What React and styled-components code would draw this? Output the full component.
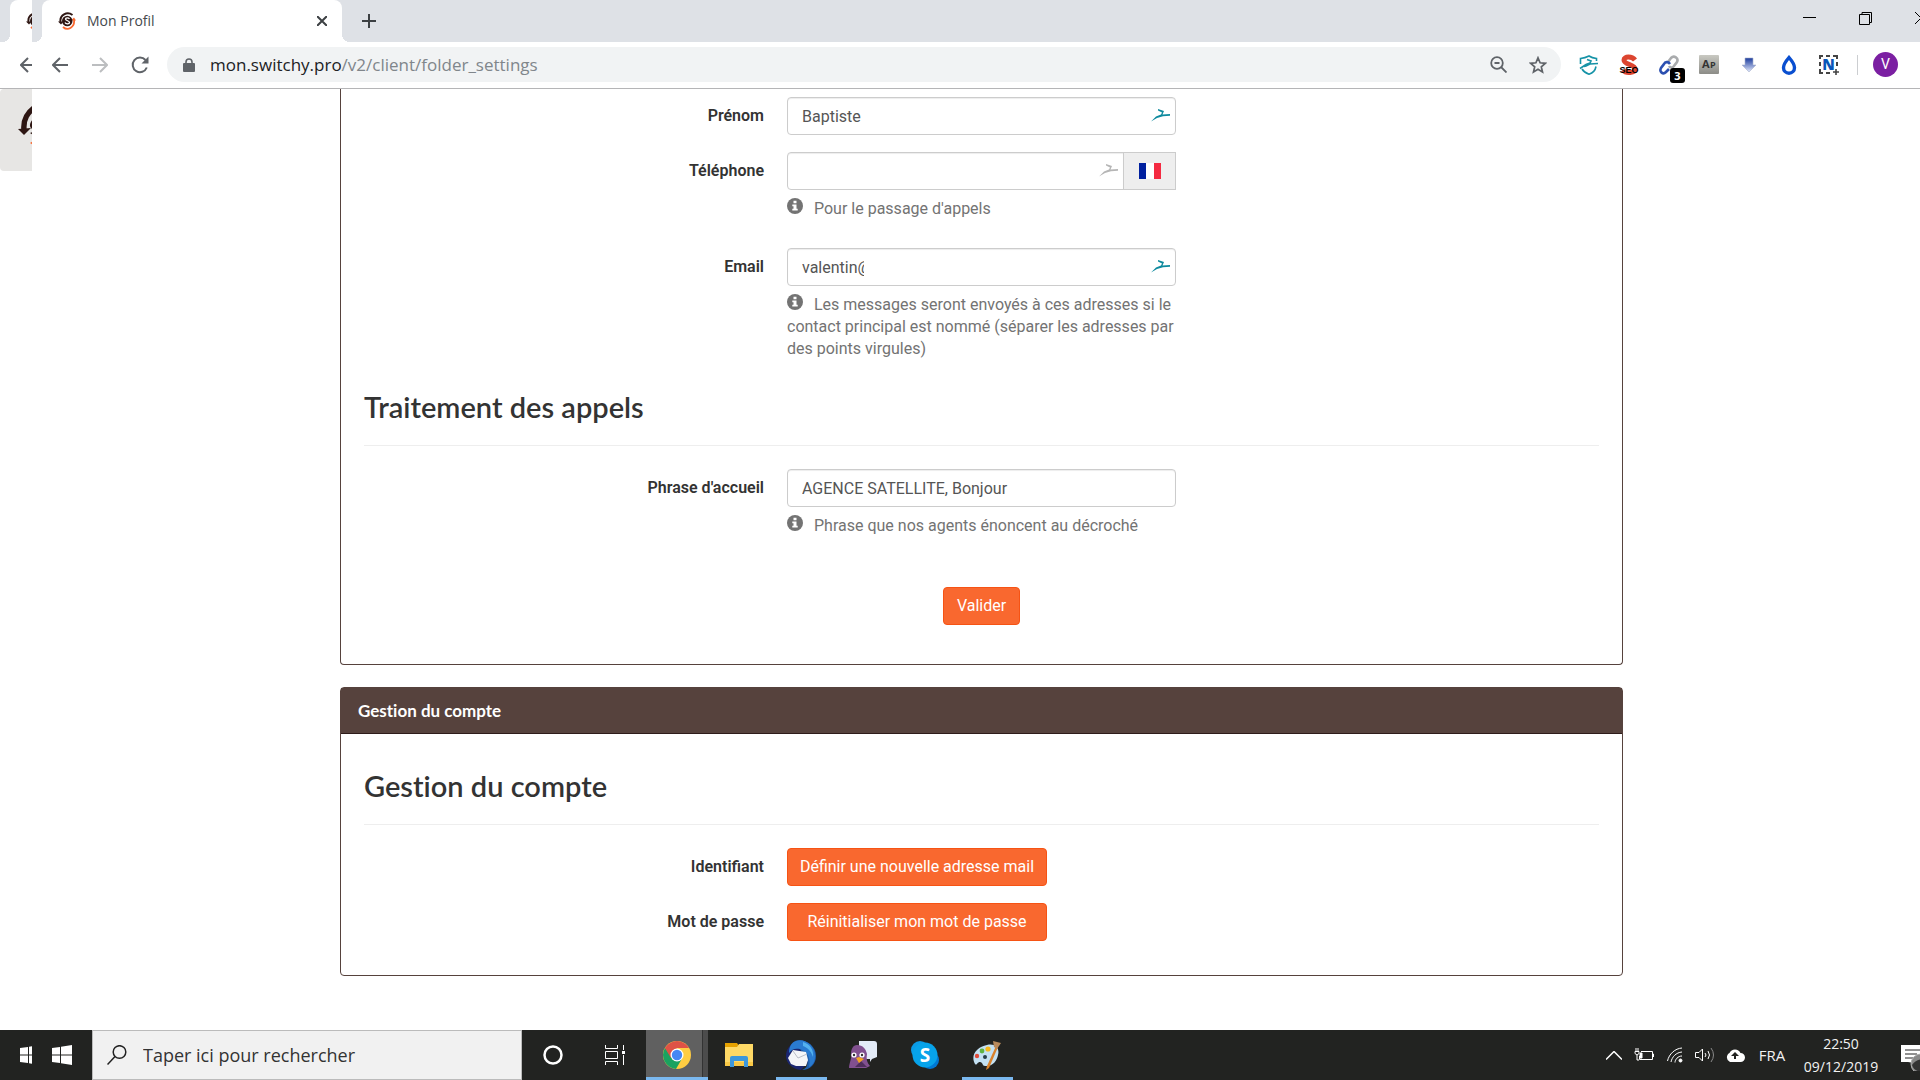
import React from "react";
import styled, { createGlobalStyle } from "styled-components";

const UI = '"Open Sans", "Noto Sans", sans-serif';
const BODY = 'Roboto, "Liberation Sans", sans-serif';
const TITLE = 'Lato, "Open Sans", sans-serif';

const GlobalStyle = createGlobalStyle`
  * { box-sizing: border-box; }
  body { margin: 0; background: #fff; font-family: ${BODY}; overflow: hidden; }
  button, input { font: inherit; }
  button { cursor: pointer; }
  svg { display: block; flex: none; }
`;

/* ---------- frame ---------- */
const Screen = styled.div`
  display: grid;
  grid-template-columns: 32px minmax(0, 1fr);
  height: 100vh;
`;
const Column = styled.div`
  display: flex;
  flex-direction: column;
  min-width: 0;
  overflow: hidden;
`;
const TabStrip = styled.div`
  display: flex;
  align-items: flex-start;
  height: 42px;
  flex: none;
  padding-left: 10px;
  background: #dee1e6;
`;
const Tab = styled.div`
  position: relative;
  display: flex;
  align-items: center;
  width: 300px;
  height: 42px;
  flex: none;
  padding: 0 12px 0 16px;
  background: #fff;
  border-radius: 8px 8px 0 0;
  font: 14px/20px ${UI};
  color: #45494d;
  &::before, &::after {
    content: "";
    position: absolute;
    bottom: 0;
    width: 8px;
    height: 8px;
  }
  &::before { left: -8px; background: radial-gradient(circle at 0 0, #dee1e6 8px, #fff 8px); }
  &::after { right: -8px; background: radial-gradient(circle at 100% 0, #dee1e6 8px, #fff 8px); }
`;
const TabTitle = styled.span`
  flex: 1;
  margin-left: 11px;
`;
const IconButton = styled.button`
  display: flex;
  align-items: center;
  justify-content: center;
  flex: none;
  width: ${(p) => p.$w || 40}px;
  height: ${(p) => p.$h || 36}px;
  padding: 0;
  border: 0;
  background: none;
`;
const WindowControls = styled.div`
  display: flex;
  margin-left: auto;
  margin-right: -29px;
  height: 36px;
`;
const Toolbar = styled.div`
  display: flex;
  align-items: center;
  flex: none;
  height: 47px;
  padding: 0 22px 1px 8px;
  background: #fff;
  border-bottom: 1px solid #b5b5b7;
`;
const Omnibox = styled.div`
  display: flex;
  align-items: center;
  flex: 1;
  height: 35px;
  margin: 0 8px 0 7px;
  padding: 0 3px 0 16px;
  border-radius: 18px;
  background: #f1f3f4;
`;
const Url = styled.a`
  flex: 1;
  margin-left: 15px;
  font: 17px/24px ${UI};
  color: #80868b;
  text-decoration: none;
  b { font-weight: 400; color: #202124; }
`;
const Extension = styled(IconButton)`
  position: relative;
`;
const Badge = styled.span`
  position: absolute;
  right: 4px;
  bottom: 0;
  width: 15px;
  height: 15px;
  border-radius: 3px;
  background: #000;
  color: #fff;
  font: 700 11px/15px ${UI};
`;
const Separator = styled.span`
  width: 1px;
  height: 20px;
  margin: 0 15px 0 8px;
  background: #ccced1;
`;
const Avatar = styled.button`
  width: 25px;
  height: 25px;
  padding: 0;
  border: 0;
  border-radius: 50%;
  background: #7b1fa2;
  color: #fff;
  font: 14px/25px ${BODY};
`;

/* ---------- page ---------- */
const Page = styled.main`
  flex: 1;
  min-height: 0;
  overflow: hidden;
  padding: 0 297px 0 308px;
`;
const Panel = styled.section`
  margin-bottom: 22px;
  border: 1px solid #56423d;
  border-radius: 4px;
  border-top-width: ${(p) => (p.$open ? 0 : 1)}px;
  border-top-left-radius: ${(p) => (p.$open ? 0 : 4)}px;
  border-top-right-radius: ${(p) => (p.$open ? 0 : 4)}px;
`;
const PanelHeader = styled.header`
  padding: 12px 17px 11px;
  border-bottom: 1px solid #2e1c1a;
  background: #56423d;
  color: #fff;
  font: 700 17px/22px ${TITLE};
  font-variant-ligatures: none;
`;
const PanelBody = styled.div`
  padding: ${(p) => p.$top}px 23px ${(p) => p.$bottom}px;
`;
const SectionTitle = styled.h2`
  margin: 0 0 23px;
  padding: ${(p) => p.$space}px 0 22px;
  border-bottom: 1px solid #eee;
  color: #333;
  font: 600 29px/32px ${TITLE};
  font-variant-ligatures: none;
`;
const Row = styled.div`
  display: grid;
  grid-template-columns: minmax(0, 1fr) 389px minmax(0, 1fr);
  column-gap: 23px;
  margin-bottom: 17px;
`;
const Label = styled.label`
  text-align: right;
  font: 600 16px/38px ${BODY};
  color: #333;
`;
const InputWrap = styled.div`
  position: relative;
  display: flex;
`;
const TextInput = styled.input`
  flex: 1;
  min-width: 0;
  height: 38px;
  padding: 0 ${(p) => p.$clip || 14}px 0 14px;
  border: 1px solid #ccc;
  border-radius: ${(p) => (p.$joined ? "4px 0 0 4px" : "4px")};
  box-shadow: inset 0 1px 1px rgba(0, 0, 0, 0.075);
  background: #fff;
  color: #555;
  font: 16px/22px ${BODY};
  outline: 0;
`;
const BirdMark = styled.span`
  position: absolute;
  top: 12px;
  right: ${(p) => p.$right}px;
`;
const CountryButton = styled.button`
  display: flex;
  align-items: center;
  justify-content: center;
  width: 53px;
  height: 38px;
  margin-left: -1px;
  border: 1px solid #ccc;
  background: #eee;
`;
const Help = styled.p`
  margin: 8px 0 ${(p) => (p.$last ? 0 : 11)}px;
  font: 16px/22px ${BODY};
  color: #737373;
  svg { display: inline-block; vertical-align: 0; margin-right: 11px; }
`;
const Actions = styled.div`
  display: flex;
  justify-content: center;
  margin-top: 50px;
`;
const PrimaryButton = styled.button`
  display: block;
  height: 38px;
  width: ${(p) => (p.$wide ? "260px" : "auto")};
  padding: 0 ${(p) => (p.$wide ? 0 : 13)}px;
  border: 1px solid #f65314;
  border-radius: 4px;
  background: #f9682f;
  color: #fff;
  font: 16px/22px ${BODY};
  white-space: nowrap;
`;
const LogoCard = styled.div`
  height: 82px;
  padding: 15px 0 0 17px;
  border-radius: 4px 0 0 4px;
  background: #e7e6e4;
`;
const SliverPage = styled.div`
  flex: 1;
  min-height: 0;
`;

/* ---------- taskbar ---------- */
const Taskbar = styled.footer`
  display: flex;
  flex: none;
  height: 50px;
  background: #222321;
  color: #fff;
`;
const SearchBox = styled.label`
  display: flex;
  align-items: center;
  width: 430px;
  padding: 0 14px;
  gap: 16px;
  border: 1px solid #bbb;
  background: #f1f1f1;
  input {
    flex: 1;
    min-width: 0;
    padding: 0;
    border: 0;
    outline: 0;
    background: none;
    font: 18px/24px ${UI};
  }
  input::placeholder { color: #333; opacity: 1; }
`;
const TaskButton = styled.button`
  display: flex;
  align-items: center;
  justify-content: center;
  width: 62px;
  padding: 0;
  border: 0;
  background: ${(p) =>
    p.$active
      ? "linear-gradient(#7ab8ef, #7ab8ef) 0 100% / 100% 3px no-repeat, linear-gradient(90deg, #606060 56px, #333 56px, #333 57px, #4c4c4c 57px)"
      : p.$running
      ? "linear-gradient(#7ab8ef, #7ab8ef) 50% 100% / 51px 3px no-repeat"
      : "none"};
`;
const Tray = styled.div`
  display: flex;
  align-items: center;
  margin-left: auto;
`;
const TrayText = styled.span`
  width: ${(p) => p.$w}px;
  text-align: center;
  font: ${(p) => p.$size || 15}px/23px ${UI};
  color: #f2f2f2;
`;
const Notice = styled.button`
  width: 31px;
  height: 50px;
  padding: 0 0 0 12px;
  border: 0;
  background: none;
  overflow: hidden;
`;

/* ---------- drawings ---------- */
const Brand = ({ size = 18 }) => (
  <svg width={size} height={size} viewBox="0 0 36 36" fill="none">
    <path d="M5 20C3 6 18-2 29 6" stroke="#2e1613" strokeWidth="4" />
    <path d="M0 19h11l-5 6z" fill="#2e1613" />
    <path d="M10 30c10 9 24 0 22-14" stroke="#f9682f" strokeWidth="3.6" />
    <path d="M26 17l6-6 4 6z" fill="#f9682f" />
    <circle cx="18.500" cy="18" r="10.500" fill="#2e1613" />
    <path d="M23 14c-2-3-8-3-8 0 0 4 8 3 8 7 0 3-7 4-9 0" stroke="#fff" strokeWidth="2.600" />
  </svg>
);
const BigBrand = () => (
  <svg width="42" height="44" viewBox="0 0 42 44" fill="none">
    <path d="M7 26C6 15 10 8 20 2" stroke="#2e1613" strokeWidth="5.500" />
    <path d="M1 25l13-1-7 7z" fill="#2e1613" />
    <path d="M17 24c-5 0-3-8 4-10" stroke="#2e1613" strokeWidth="2.500" />
    <path d="M13 29l5-2v5z" fill="#2e1613" />
    <path d="M13 39l6-4v8z" fill="#f9682f" />
  </svg>
);
const Arrow = ({ right }) => (
  <svg width="16" height="16" viewBox="0 0 16 16" fill="none" stroke={right ? "#bcbec0" : "#5f6368"} strokeWidth="2">
    <path d={right ? "M0 8h14M8 1l7 7-7 7" : "M16 8H2M8 1L1 8l7 7"} />
  </svg>
);
const Bird = ({ color = "#0e8a9e" }) => (
  <svg width="20" height="13" viewBox="0 0 20 13">
    <path d="M0 12.500l5-5 5-2 1-2-4-2V0l6 2-1.500 3.500L19 5v1.800l-7 .4-6 1.800z" fill={color} />
  </svg>
);
const Info = () => (
  <svg width="16" height="16" viewBox="0 0 16 16">
    <circle cx="8" cy="8" r="8" fill="#737373" />
    <path d="M6.500 2.800h3v2.400h-3zM5.300 6.400h4.200v4.400h1.200v1.800H5.300v-1.800h1.200V8.200H5.300z" fill="#fff" />
  </svg>
);
const Flag = () => (
  <svg width="22" height="16" viewBox="0 0 22 16">
    <path d="M0 0h7v16H0z" fill="#00209f" />
    <path d="M7 0h8v16H7z" fill="#fff" />
    <path d="M15 0h7v16h-7z" fill="#f42a41" />
  </svg>
);
const WinLogo = () => (
  <svg width="20" height="20" viewBox="0 0 20 20" fill="#fff">
    <path d="M0 3l8-1v7.500H0zM9 1.800L20 0v9.500H9zM0 10.500h8V18l-8-1zM9 10.500h11V20L9 18.200z" />
  </svg>
);
const Chrome = () => (
  <svg width="28" height="28" viewBox="0 0 28 28">
    <circle cx="14" cy="14" r="14" fill="#ffcd42" />
    <path d="M1.900 7A14 14 0 0 0 13 28l6-10.500-5-3.500z" fill="#1aa260" />
    <path d="M1.900 7A14 14 0 0 1 26.100 7H14L8 17z" fill="#de5246" />
    <circle cx="14" cy="14" r="6.500" fill="#fff" />
    <circle cx="14" cy="14" r="5.200" fill="#4587f3" />
  </svg>
);
const Folder = () => (
  <svg width="28" height="24" viewBox="0 0 28 24">
    <path d="M0 0h12l2 3v3H0z" fill="#e6a100" />
    <path d="M0 4h12l2-3h14v22H0z" fill="#ffd966" />
    <path d="M0 19h28v4H0z" fill="#f9c846" />
    <path d="M5 24V15q0-2 2-2h14q2 0 2 2v9h-4v-6H9v6z" fill="#3d97dc" />
  </svg>
);
const Thunderbird = () => (
  <svg width="30" height="30" viewBox="0 0 30 30">
    <path d="M9 1C18-2 30 5 30 16c0 8-6 14-14 14 5-2 6-5 5-9z" fill="#1f5fae" />
    <path d="M9 1C4 5 0 9 0 16c0 7 6 13 15 14l7-8z" fill="#1b2670" />
    <path d="M10 1c9-3 19 5 19 15 0 5-2 9-6 11 2-9-1-15-9-18-5-1-8 0-11 4C3 6 6 2 10 1z" fill="#2a7bd0" />
    <path d="M17 2c7 2 11 8 10 15-2-6-5-9-10-11z" fill="#54b1ee" />
    <path d="M2 18l5-8 13 2 2 8-2 6-10 0-5-2z" fill="#f4f5f8" />
    <path d="M7 11l5 7 9-4" stroke="#b9bdc8" fill="none" />
  </svg>
);
const Pidgin = () => (
  <svg width="30" height="28" viewBox="0 0 30 28">
    <path d="M11 0h15q3 0 3 3v13l-5 2-2 3v-3h-6q-6-3-5-10z" fill="#e3ebf7" />
    <path d="M9 4c6 0 9 4 10 9-1 5 0 9 3 12l-4 2H1c0-5 3-9 2-14 0-5 2-9 6-9z" fill="#81508f" />
    <path d="M13 20l6 6H7z" fill="#4e2e5c" />
    <circle cx="6" cy="14" r="2.600" fill="#fff" /><circle cx="14" cy="14" r="2.600" fill="#fff" />
    <circle cx="6" cy="14" r="1.200" fill="#333" /><circle cx="14" cy="14" r="1.200" fill="#333" />
    <path d="M8 17l3-1 5 2-5 4z" fill="#f3a321" />
  </svg>
);
const Skype = () => (
  <svg width="28" height="28" viewBox="0 0 28 28">
    <circle cx="9" cy="9" r="9" fill="#0b9be6" /><circle cx="19" cy="19" r="9" fill="#0078d4" />
    <circle cx="14" cy="14" r="12.500" fill="#07a3ea" />
    <text x="14" y="21" textAnchor="middle" fontFamily="Open Sans" fontWeight="700" fontSize="19" fill="#fff">S</text>
  </svg>
);
const Paint = () => (
  <svg width="30" height="30" viewBox="0 0 30 30">
    <path d="M15 5c8-2 13 3 11 10-1 6-6 12-13 11-3 0-2-4-5-4s-3 4-5 2C-2 15 5 7 15 5z" fill="#c4e1f3" />
    <circle cx="13" cy="17" r="2" fill="#263c4a" />
    <circle cx="5" cy="16" r="2.200" fill="#e04b3a" /><circle cx="10" cy="11" r="2.400" fill="#5fb343" /><circle cx="16" cy="9" r="2.600" fill="#f9b91c" />
    <path d="M24 6l2 1-9 21-3 2 1-4z" fill="#d9812b" />
    <path d="M21 1l8 2-4 6-3-2z" fill="#b98a5c" />
  </svg>
);
const Shield = () => (
  <svg width="20" height="20" viewBox="0 0 20 20" fill="none" stroke="#1693a7" strokeWidth="1.600">
    <path d="M17.500 6V3.500Q13 3 10 1 6 3 1.500 3.500V9M3 14q2 3.500 7 5.200 6-2 7-7.700" />
    <path d="M1 13.500l6-4 4-1.500 1-2-4-1.500M19 8.500l-8 .5-4 2-2 .5" />
  </svg>
);
const Seo = () => (
  <svg width="20" height="22" viewBox="0 0 20 22">
    <path d="M16 6C13 2 5 2 5 6c0 5 11 4 11 9 0 4-9 5-12 1" stroke="#dc4530" strokeWidth="5" fill="none" />
    <text x="10" y="19" textAnchor="middle" fontFamily="Liberation Sans" fontWeight="700" fontSize="9" fill="#000">SEO</text>
  </svg>
);
const Link = () => (
  <svg width="20" height="20" viewBox="0 0 20 20" fill="none" strokeWidth="2.600">
    <path d="M9 7l3-4c3-3 8 0 6 4l-3 4c-1 2-4 2-5 0" stroke="#a9abad" />
    <path d="M11 9C9 6 6 7 5 9l-3 4c-2 4 2 7 5 4l3-3" stroke="#2b4fb0" />
  </svg>
);
const Ap = () => (
  <svg width="20" height="20" viewBox="0 0 20 20">
    <defs><linearGradient id="ap" x2="0" y2="1"><stop stopColor="#c9c9c2" /><stop offset="1" stopColor="#8c8c87" /></linearGradient></defs>
    <rect width="20" height="19" rx="1" fill="url(#ap)" />
    <text x="3" y="13" fontFamily="Open Sans" fontWeight="700" fontSize="11" fill="#333">A</text>
    <text x="11" y="13" fontFamily="Open Sans" fontWeight="700" fontSize="9" fill="#333">P</text>
  </svg>
);
const Down = () => (
  <svg width="16" height="16" viewBox="0 0 16 16">
    <defs><linearGradient id="dn" x2="0" y2="1"><stop stopColor="#1a3a9c" /><stop offset="1" stopColor="#e3eafc" /></linearGradient></defs>
    <path d="M4 1h8v7h3l-7 7-7-7h3z" fill="url(#dn)" stroke="#aab2cc" strokeWidth="0.600" />
  </svg>
);
const Drop = () => (
  <svg width="16" height="20" viewBox="0 0 16 20">
    <path d="M8 2.500c3.500 4 5.500 7 5.500 10.200a5.500 5.500 0 0 1-11 0C2.500 9.500 4.500 6.500 8 2.500z" fill="#fff" stroke="#0a4fd0" strokeWidth="3.400" />
  </svg>
);
const Nimbus = () => (
  <svg width="22" height="22" viewBox="0 0 22 22">
    <path d="M2 5V2h3M8 2h4M15 2h4v3M19 8v4M2 8v4M2 15v4h3M8 19h4" fill="none" stroke="#444" strokeWidth="2" />
    <text x="10.500" y="16" textAnchor="middle" fontFamily="Open Sans" fontWeight="800" fontSize="15" fill="#0a56b8">N</text>
    <path d="M15 18h6M18 15v6" stroke="#444" strokeWidth="1.600" />
  </svg>
);

const WhiteLine = ({ w, h, d, sw = 1.5, children }) => (
  <svg width={w} height={h} viewBox={`0 0 ${w} ${h}`} fill="none" stroke="#fff" strokeWidth={sw}>
    {d && <path d={d} />}
    {children}
  </svg>
);

/* ---------- parts ---------- */
const extensions = [
  ["Dashlane", Shield], ["SEO", Seo], ["Liens", Link, "3"], ["AP", Ap],
  ["Téléchargements", Down], ["Goutte", Drop], ["Nimbus", Nimbus],
];

function BrowserTop() {
  return (
    <>
      <TabStrip>
        <Tab>
          <Brand />
          <TabTitle>Mon Profil</TabTitle>
          <IconButton $w={16} $h={20} aria-label="Fermer l'onglet">
            <svg width="10" height="10" viewBox="0 0 10 10" stroke="#3c4043" strokeWidth="2"><path d="M0 0l10 10M10 0L0 10" /></svg>
          </IconButton>
        </Tab>
        <IconButton $w={54} $h={42} aria-label="Nouvel onglet">
          <svg width="14" height="14" viewBox="0 0 14 14" stroke="#3c4043" strokeWidth="2"><path d="M0 7h14M7 0v14" /></svg>
        </IconButton>
        <WindowControls>
          <IconButton $w={56} aria-label="Réduire">
            <svg width="13" height="13" viewBox="0 0 13 13" stroke="#000"><path d="M0 5.500h13" /></svg>
          </IconButton>
          <IconButton $w={56} aria-label="Restaurer">
            <svg width="13" height="14" viewBox="0 0 13 14" fill="none" stroke="#000"><path d="M.5 3.500h10v10H.5zM3 3V1.500h9.500v10H11" /></svg>
          </IconButton>
          <IconButton $w={56} aria-label="Fermer">
            <svg width="12" height="12" viewBox="0 0 12 12" stroke="#000"><path d="M0 0l12 12M12 0L0 12" /></svg>
          </IconButton>
        </WindowControls>
      </TabStrip>
      <Toolbar>
        <IconButton aria-label="Précédent"><Arrow /></IconButton>
        <IconButton aria-label="Suivant"><Arrow right /></IconButton>
        <IconButton aria-label="Actualiser">
          <svg width="18" height="18" viewBox="0 0 18 18" fill="none" stroke="#5f6368" strokeWidth="2">
            <path d="M15.800 11.500A7.300 7.300 0 1 1 14.500 4" /><path d="M17.500.5v7h-7z" fill="#5f6368" stroke="none" />
          </svg>
        </IconButton>
        <Omnibox>
          <svg width="12" height="14" viewBox="0 0 12 14">
            <rect y="5" width="12" height="9" rx="1" fill="#5f6368" />
            <path d="M3 6V4a3 3 0 0 1 6 0v2" fill="none" stroke="#5f6368" strokeWidth="1.600" />
          </svg>
          <Url href="#settings"><b>mon.switchy.pro</b>/v2/client/folder_settings</Url>
          <IconButton aria-label="Zoom">
            <svg width="17" height="17" viewBox="0 0 17 17" fill="none" stroke="#5f6368" strokeWidth="1.800">
              <circle cx="7" cy="7" r="5.800" /><path d="M11 11l5.500 5.500M4.500 7h5" />
            </svg>
          </IconButton>
          <IconButton aria-label="Favori">
            <svg width="18" height="18" viewBox="0 0 18 18" fill="none" stroke="#5f6368" strokeWidth="1.700">
              <path d="M9 1.800l2.100 5 5.200.5-4 3.500 1.200 5.200L9 13.200 4.500 16l1.200-5.200-4-3.500 5.200-.5z" />
            </svg>
          </IconButton>
        </Omnibox>
        {extensions.map(([name, Icon, badge]) => (
          <Extension key={name} aria-label={name}>
            <Icon />
            {badge && <Badge>{badge}</Badge>}
          </Extension>
        ))}
        <Separator />
        <Avatar>V</Avatar>
      </Toolbar>
    </>
  );
}

function Field({ id, label, children }) {
  return (
    <Row>
      <Label htmlFor={id}>{label}</Label>
      <div>{children}</div>
    </Row>
  );
}

function SettingsPage() {
  return (
    <Page>
      <Panel $open>
        <PanelBody $top={8} $bottom={39}>
          <Field id="prenom" label="Prénom">
            <InputWrap>
              <TextInput id="prenom" defaultValue="Baptiste" />
              <BirdMark $right={5}><Bird /></BirdMark>
            </InputWrap>
          </Field>
          <Field id="tel" label="Téléphone">
            <InputWrap>
              <TextInput id="tel" type="tel" $joined />
              <BirdMark $right={57}><Bird color="#b5b5b5" /></BirdMark>
              <CountryButton aria-label="France"><Flag /></CountryButton>
            </InputWrap>
            <Help><Info />Pour le passage d'appels</Help>
          </Field>
          <Field id="email" label="Email">
            <InputWrap>
              <TextInput id="email" defaultValue="valentin@" $clip={311} />
              <BirdMark $right={5}><Bird /></BirdMark>
            </InputWrap>
            <Help>
              <Info />Les messages seront envoyés à ces adresses si le contact principal est nommé (séparer les
              adresses par des points virgules)
            </Help>
          </Field>
          <SectionTitle $space={3}>Traitement des appels</SectionTitle>
          <Field id="phrase" label="Phrase d'accueil">
            <InputWrap>
              <TextInput id="phrase" defaultValue="AGENCE SATELLITE, Bonjour" />
            </InputWrap>
            <Help $last><Info />Phrase que nos agents énoncent au décroché</Help>
          </Field>
          <Actions><PrimaryButton>Valider</PrimaryButton></Actions>
        </PanelBody>
      </Panel>
      <Panel>
        <PanelHeader>Gestion du compte</PanelHeader>
        <PanelBody $top={22} $bottom={17}>
          <SectionTitle $space={14}>Gestion du compte</SectionTitle>
          <Field id="mail" label="Identifiant">
            <PrimaryButton id="mail" $wide>Définir une nouvelle adresse mail</PrimaryButton>
          </Field>
          <Field id="pass" label="Mot de passe">
            <PrimaryButton id="pass" $wide>Réinitialiser mon mot de passe</PrimaryButton>
          </Field>
        </PanelBody>
      </Panel>
    </Page>
  );
}

function WindowsTaskbar() {
  return (
    <Taskbar>
      <IconButton $w={60} $h={50} aria-label="Démarrer"><WinLogo /></IconButton>
      <SearchBox>
        <svg width="20" height="20" viewBox="0 0 20 20" fill="none" stroke="#222" strokeWidth="1.500">
          <circle cx="12.500" cy="7" r="6.300" />
          <path d="M8 11.500L.5 19.500" />
        </svg>
        <input type="search" aria-label="Rechercher" placeholder="Taper ici pour rechercher" />
      </SearchBox>
      <TaskButton aria-label="Cortana">
        <WhiteLine w={20} h={20}><circle cx="10" cy="10" r="8.500" strokeWidth="2.500" /></WhiteLine>
      </TaskButton>
      <TaskButton aria-label="Vue des tâches">
        <WhiteLine w={20} h={20} sw={1} d="M.5 0v3.500h12V0M.5 20v-3.500h12V20M.5 6.500h12v7H.5zM18.500 0v5M18.500 10v10">
          <path d="M17 6h3v3h-3z" fill="#fff" stroke="none" />
        </WhiteLine>
      </TaskButton>
      <TaskButton $active aria-label="Chrome"><Chrome /></TaskButton>
      <TaskButton aria-label="Explorateur"><Folder /></TaskButton>
      <TaskButton $running aria-label="Thunderbird"><Thunderbird /></TaskButton>
      <TaskButton aria-label="Pidgin"><Pidgin /></TaskButton>
      <TaskButton aria-label="Skype"><Skype /></TaskButton>
      <TaskButton $running aria-label="Paint"><Paint /></TaskButton>
      <Tray>
        <IconButton $w={30} aria-label="Icônes cachées"><WhiteLine w={16} h={9} d="M0 8.500l8-8 8 8" /></IconButton>
        <IconButton $w={30} aria-label="Batterie">
          <WhiteLine w={20} h={14} sw={1} d="M7 3.500h11.500v8H5.500V8M18.500 6h1v3M1 3.500h4v2q-2 3-4 0zM2 0v3M4 0v3M3 7v5h2">
            <path d="M6 5h2v5H6z" fill="#fff" />
          </WhiteLine>
        </IconButton>
        <IconButton $w={31} aria-label="Wi-Fi">
          <WhiteLine w={16} h={16} sw={1} d="M.5 14C2 7 8 1.500 15 1M4 15C5 10 9 5.500 15 5M8 15.500c0-3 3-6.500 7-6.500">
            <circle cx="13.500" cy="13.500" r="1.500" fill="#fff" />
          </WhiteLine>
        </IconButton>
        <IconButton $w={29} aria-label="Volume">
          <WhiteLine w={20} h={16} sw={1} d="M.5 5.500H4L7.500 2v12L4 10.500H.5zM10 6q2 2 0 4M13 4q3 4 0 8">
            <path d="M16 1q5 7 0 14" stroke="#8a8a8a" />
          </WhiteLine>
        </IconButton>
        <IconButton $w={32} aria-label="Sauvegarde">
          <svg width="20" height="14" viewBox="0 0 20 14">
            <path d="M5 14a5 5 0 0 1-.5-9A6 6 0 0 1 15.500 5 4.500 4.500 0 0 1 15.500 14z" fill="#fff" />
            <path d="M10 4l4 4h-3v3H9V8H6z" fill="#222321" />
          </svg>
        </IconButton>
        <TrayText $w={42}>FRA</TrayText>
        <TrayText $w={96} $size={14}>22:50<br />09/12/2019</TrayText>
        <Notice aria-label="Notifications">
          <svg width="26" height="32" viewBox="0 0 26 32">
            <path d="M0 6h22v18h-9l-6-1H0z" fill="#fff" />
            <path d="M4 11h16M4 15h12M4 19h8" stroke="#222" />
            <circle cx="20" cy="25" r="10" fill="#888" stroke="#aaa" /><path d="M11 26q4-6 12-6v13q-10 0-12-7z" fill="#333" />
          </svg>
        </Notice>
      </Tray>
    </Taskbar>
  );
}

export default function App() {
  return (
    <Screen>
      <GlobalStyle />
      <Column>
        <TabStrip><Tab><Brand /></Tab></TabStrip>
        <Toolbar><IconButton aria-label="Précédent"><Arrow /></IconButton></Toolbar>
        <SliverPage><LogoCard><BigBrand /></LogoCard></SliverPage>
        <Taskbar><IconButton $w={60} $h={50} aria-label="Démarrer"><WinLogo /></IconButton></Taskbar>
      </Column>
      <Column>
        <BrowserTop />
        <SettingsPage />
        <WindowsTaskbar />
      </Column>
    </Screen>
  );
}
